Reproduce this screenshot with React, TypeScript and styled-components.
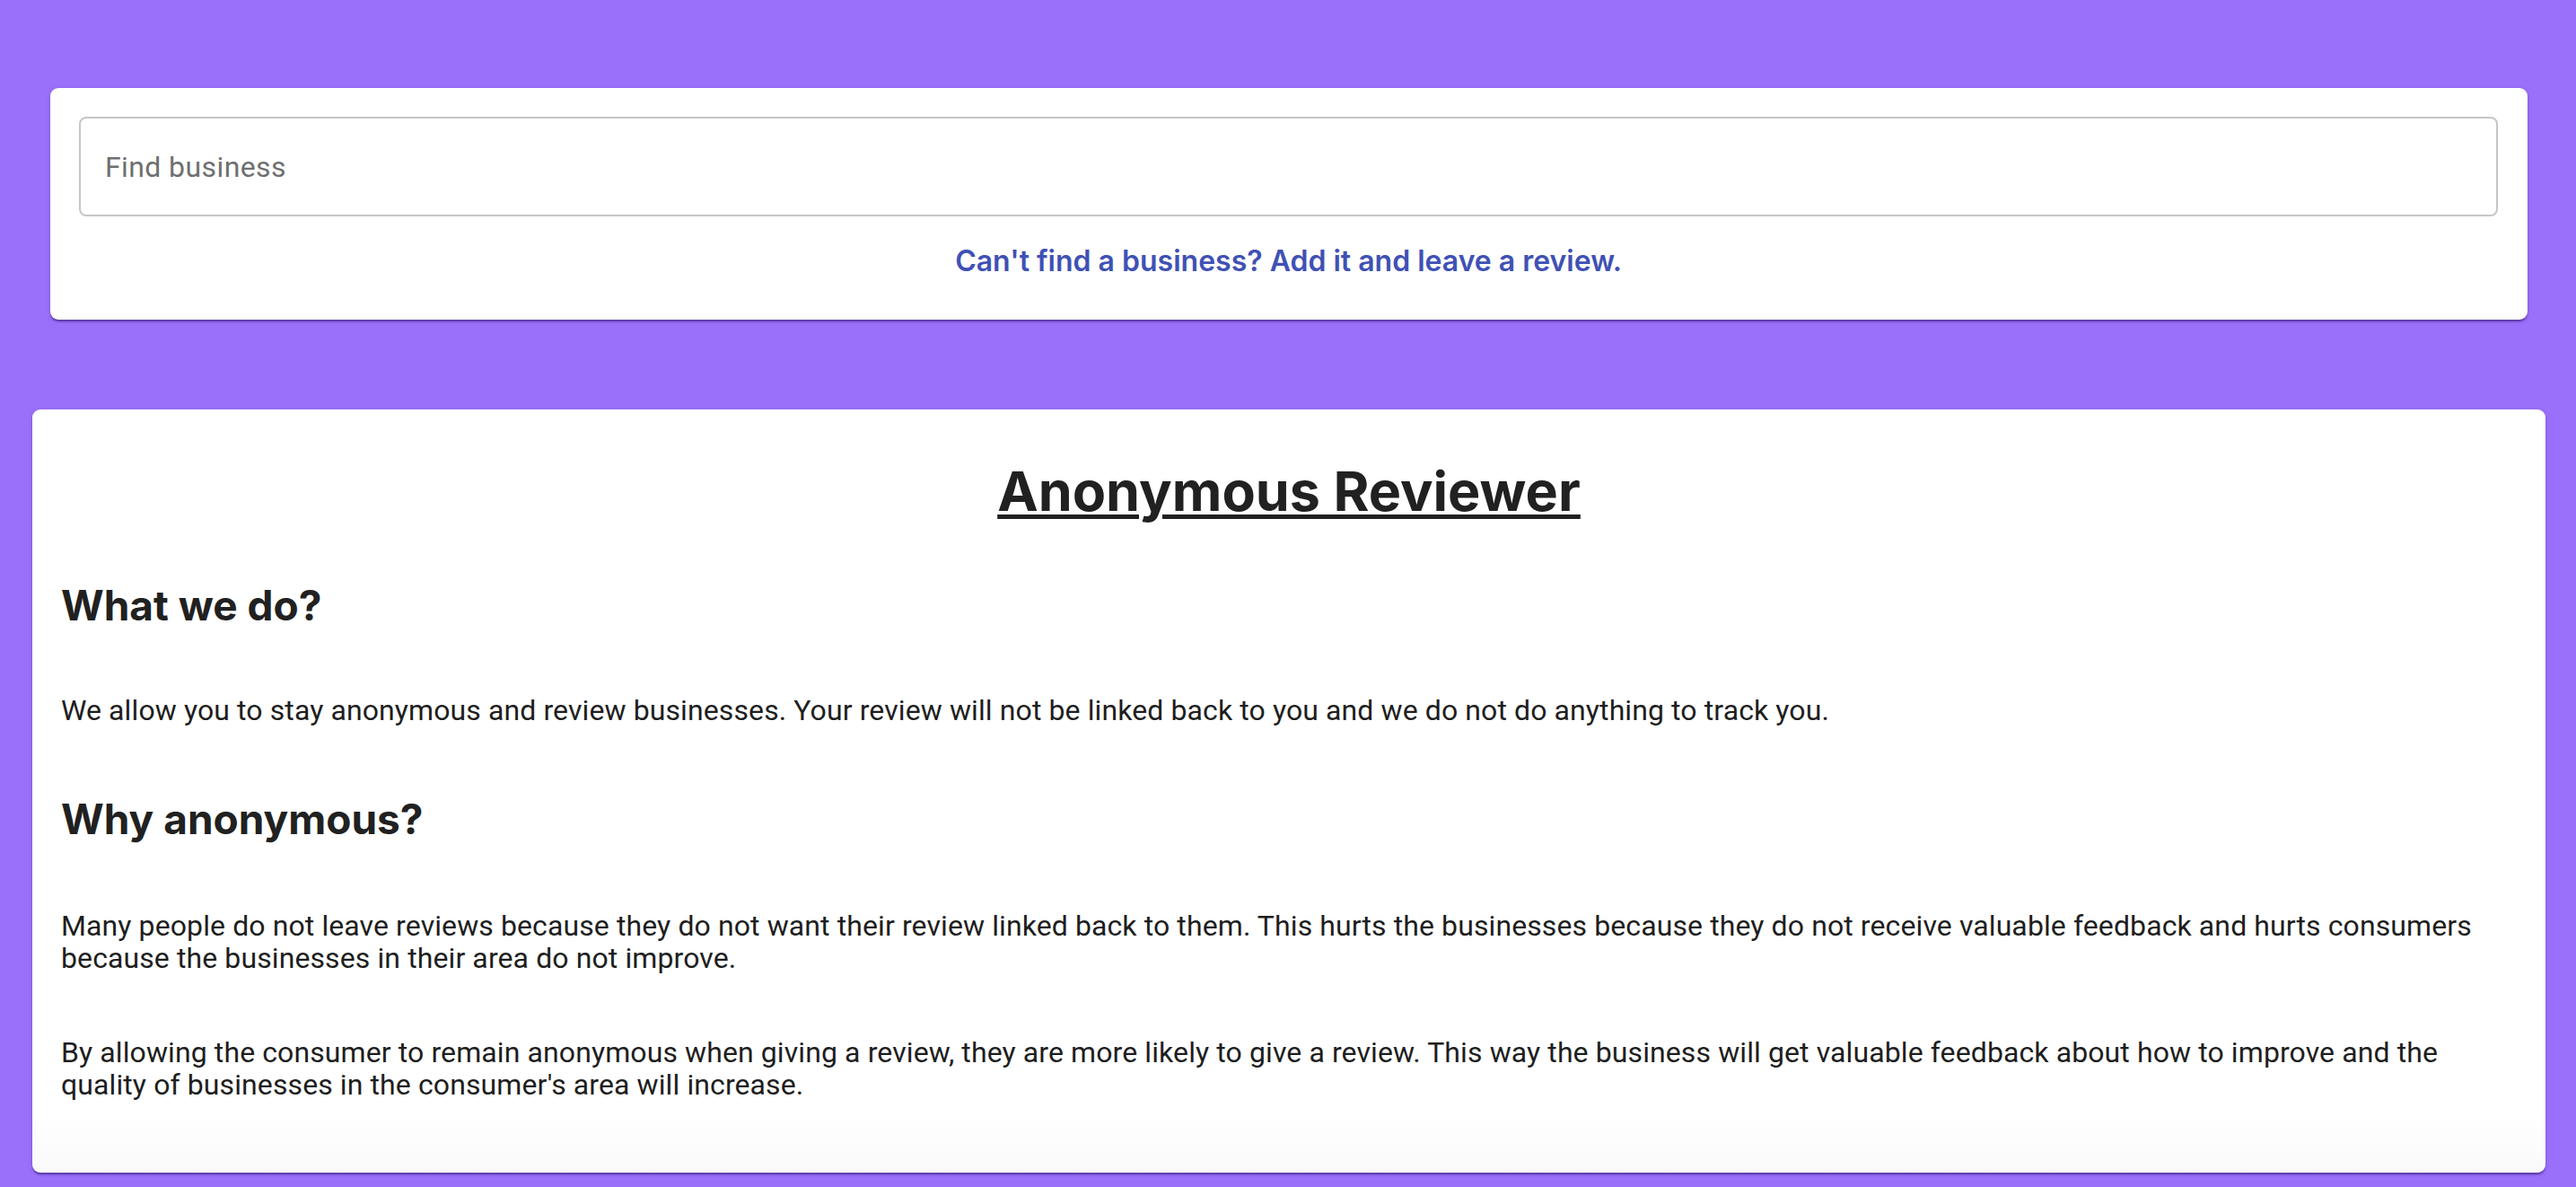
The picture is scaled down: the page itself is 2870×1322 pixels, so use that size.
import React from "react";
import styled, { createGlobalStyle } from "styled-components";

const GlobalStyle = createGlobalStyle`
  html, body {
    margin: 0;
    padding: 0;
    background: #9a6ffa;
  }
  * { box-sizing: border-box; }
`;

const Page = styled.main`
  display: flex;
  flex-direction: column;
  min-height: 1322px;
  background: #9a6ffa;
  padding: 98px 0 16px;
`;

const Card = styled.section<{ $inset: string }>`
  margin: ${(p) => p.$inset};
  background: #ffffff;
  border-radius: 9px;
  box-shadow: 0 3px 2px -1px rgba(40, 10, 110, 0.45), 0 2px 3px 0 rgba(0, 0, 0, 0.12),
    0 1px 6px 0 rgba(0, 0, 0, 0.08);
`;

const SearchCard = styled(Card)`
  display: flex;
  flex-direction: column;
  align-items: stretch;
  padding: 32px 33px 46px 32px;
`;

const SearchInput = styled.input`
  height: 111px;
  width: 100%;
  border: 2px solid #c6c6c6;
  border-radius: 8px;
  padding: 0 27px;
  font-family: Roboto, "Liberation Sans", sans-serif;
  font-size: 32px;
  letter-spacing: 0.4px;
  color: #212121;
  background: #fff;
  outline: none;
  &::placeholder {
    color: #6f6f6f;
    opacity: 1;
  }
`;

const AddLink = styled.a`
  margin-top: 31px;
  align-self: center;
  font-family: Inter, "Liberation Sans", sans-serif;
  font-weight: 600;
  font-size: 32px;
  line-height: 38px;
  color: #3f51b5;
  text-decoration: none;
  cursor: pointer;
`;

const AboutCard = styled(Card)`
  display: flex;
  flex-direction: column;
  padding: 54px 32px 80px 32px;
  background: linear-gradient(to bottom, #ffffff calc(100% - 70px), #fafafa 100%);
`;

const Title = styled.h1`
  margin: 0;
  text-align: center;
  font-family: Inter, "Liberation Sans", sans-serif;
  font-weight: 700;
  font-size: 61px;
  line-height: 75px;
  color: #212121;
  text-decoration: underline;
  text-decoration-thickness: 5px;
  text-underline-offset: 4px;
`;

const Heading = styled.h2<{ $top: number }>`
  margin: ${(p) => p.$top}px 0 0;
  font-family: Inter, "Liberation Sans", sans-serif;
  font-weight: 700;
  font-size: 46px;
  line-height: 56px;
  color: #212121;
`;

const Paragraph = styled.p<{ $top: number }>`
  margin: ${(p) => p.$top}px 0 0;
  font-family: Roboto, "Liberation Sans", sans-serif;
  font-weight: 400;
  font-size: 32px;
  line-height: 36px;
  letter-spacing: 0.1px;
  color: #1e1e1e;
`;

export default function App() {
  return (
    <>
      <GlobalStyle />
      <Page>
        <SearchCard $inset="0 54px 0 56px">
          <SearchInput type="text" placeholder="Find business" />
          <AddLink>Can't find a business? Add it and leave a review.</AddLink>
        </SearchCard>
        <AboutCard $inset="100px 34px 0 36px">
          <Title>Anonymous Reviewer</Title>
          <Heading $top={61}>What we do?</Heading>
          <Paragraph $top={71}>
            We allow you to stay anonymous and review businesses. Your review will not be linked
            back to you and we do not do anything to track you.
          </Paragraph>
          <Heading $top={75}>Why anonymous?</Heading>
          <Paragraph $top={73}>
            Many people do not leave reviews because they do not want their review linked back to
            them. This hurts the businesses because they do not receive valuable feedback and hurts
            consumers because the businesses in their area do not improve.
          </Paragraph>
          <Paragraph $top={69}>
            By allowing the consumer to remain anonymous when giving a review, they are more likely
            to give a review. This way the business will get valuable feedback about how to improve
            and the quality of businesses in the consumer's area will increase.
          </Paragraph>
        </AboutCard>
      </Page>
    </>
  );
}
